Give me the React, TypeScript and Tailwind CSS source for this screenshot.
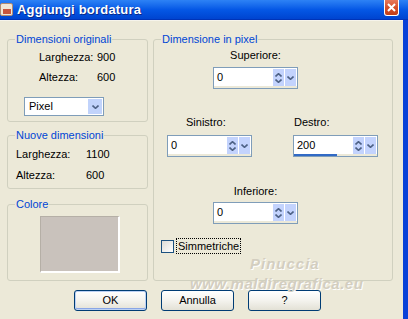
import type { ReactNode } from "react";

function Group({ title, className = "", children }: { title: string; className?: string; children: ReactNode }) {
  return (
    <fieldset className={`border border-[#D0D0BF] rounded-[3px] min-w-0 ${className}`}>
      <legend className="ml-[7px] px-[1px] text-[#0046D5] leading-[13px]">{title}</legend>
      {children}
    </fieldset>
  );
}

function Chevron({ up = false, w = 7 }: { up?: boolean; w?: number }) {
  return (
    <svg width={w} height="4" viewBox="0 0 7 4" className="block">
      <path d={up ? "M0.5 3.5 L3.5 0.7 L6.5 3.5" : "M0.5 0.5 L3.5 3.3 L6.5 0.5"} fill="none" stroke="#4D6185" strokeWidth="1.6" />
    </svg>
  );
}

function SpinBox({ value, fill = 0 }: { value: string; fill?: number }) {
  return (
    <div className="w-[85px] h-[22px] border border-[#7F9DB9] bg-white flex flex-col">
      <div className="flex flex-1 items-stretch pr-[1px] pt-[1px]">
        <span className="flex-1 pl-[3px] text-[11px] leading-[17px]">{value}</span>
        <div className="w-[11px] bg-[#C3D3FD] flex flex-col items-center justify-center gap-[2px]">
          <Chevron up />
          <Chevron />
        </div>
        <div className="w-[11px] ml-[1px] bg-[#C3D3FD] flex items-center justify-center">
          <Chevron />
        </div>
      </div>
      <div className="h-[3px] bg-[#ECE9D8]">
        <div className="h-full bg-[#316AC5]" style={{ width: `${fill}%` }} />
      </div>
    </div>
  );
}

function XpButton({ label, isDefault = false }: { label: string; isDefault?: boolean }) {
  return (
    <button
      className={`w-[73px] h-[21px] rounded-[3px] border border-[#003C74] bg-linear-to-b from-white via-[#F4F3EE] to-[#E3E1D6] text-[11px] leading-[19px] text-black ${
        isDefault ? "shadow-[inset_0_0_0_1px_#BCD1F4,inset_0_-1px_0_1px_#8AA6E6]" : ""
      }`}
    >
      {label}
    </button>
  );
}

export default function App() {
  return (
    <div className="w-[408px] h-[319px] overflow-hidden flex flex-col font-['Liberation_Sans',Arial,sans-serif] text-[11px] text-black select-none">
      {/* Title bar */}
      <div className="h-[20px] flex items-start bg-linear-to-b from-[#2D82F5] via-[#0558E6] to-[#0044D0] border-b border-[#0034B8]">
        <div className="mt-[3px] w-[13px] h-[13px] rounded-[2px] bg-[#F0E6D6] border border-[#B08A70] flex items-end justify-center">
          <div className="w-[8px] h-[5px] mb-[1px] bg-[#C8553D]" />
        </div>
        <span className="ml-[4px] mt-[2px] text-[13px] font-bold leading-[15px] text-white [text-shadow:1px_1px_0_#0A2A8A] tracking-[0.2px]">
          Aggiungi bordatura
        </span>
        <div className="ml-auto mr-[9px] w-[15px] h-[16px] rounded-b-[3px] border border-t-0 border-white bg-linear-to-b from-[#E8785A] via-[#D6502A] to-[#C13E16] flex items-center justify-center">
          <svg width="9" height="9" viewBox="0 0 9 9">
            <path d="M1 1 L8 8 M8 1 L1 8" stroke="white" strokeWidth="2" />
          </svg>
        </div>
      </div>

      {/* Body */}
      <div className="flex-1 flex bg-[#0841D8]">
        <div className="flex-1 bg-[#ECE9D8] border-t border-[#F6F4EC] pt-[12px] pl-[7px]">
          <div className="flex gap-[5px] w-[386px]">
            {/* Left column */}
            <div className="w-[141px] flex flex-col">
              <Group title="Dimensioni originali">
                <div className="pt-[5px] pb-[5px]">
                  <div className="grid grid-cols-[58px_auto] gap-y-[7px] pl-[31px] leading-[13px]">
                    <span>Larghezza:</span>
                    <span>900</span>
                    <span>Altezza:</span>
                    <span>600</span>
                  </div>
                  <div className="ml-[16px] mt-[13px] w-[80px] h-[19px] border border-[#7F9DB9] bg-white flex items-stretch p-[1px]">
                    <span className="flex-1 pl-[3px] leading-[15px]">Pixel</span>
                    <div className="w-[14px] bg-[#C1D3FB] flex items-center justify-center">
                      <Chevron />
                    </div>
                  </div>
                </div>
              </Group>

              <Group title="Nuove dimensioni" className="mt-[7px]">
                <div className="pt-[6px] pb-[6px] grid grid-cols-[70px_auto] gap-y-[8px] pl-[8px] leading-[13px]">
                  <span>Larghezza:</span>
                  <span>1100</span>
                  <span>Altezza:</span>
                  <span>600</span>
                </div>
              </Group>

              <Group title="Colore" className="mt-[9px]">
                <div className="pt-[5px] pb-[7px] pl-[32px]">
                  <div className="w-[80px] h-[57px] bg-[#C9C2BC] border-t border-l border-r-2 border-b-2 border-t-[#B5AFA6] border-l-[#B5AFA6] border-r-white border-b-white" />
                </div>
              </Group>
            </div>

            {/* Right group */}
            <Group title="Dimensione in pixel" className="relative w-[240px]">
              <div className="pl-[59px] pt-[3px]">
                <div className="w-[85px] text-center leading-[13px]">Superiore:</div>
                <div className="mt-[5px]">
                  <SpinBox value="0" />
                </div>
              </div>

              <div className="flex gap-[41px] pl-[13px] mt-[27px]">
                <div>
                  <div className="pl-[19px] leading-[13px]">Sinistro:</div>
                  <div className="mt-[6px]">
                    <SpinBox value="0" />
                  </div>
                </div>
                <div>
                  <div className="pl-[1px] leading-[13px]">Destro:</div>
                  <div className="mt-[6px]">
                    <SpinBox value="200" fill={52} />
                  </div>
                </div>
              </div>

              <div className="pl-[59px] mt-[28px]">
                <div className="w-[85px] text-center leading-[13px]">Inferiore:</div>
                <div className="mt-[4px]">
                  <SpinBox value="0" />
                </div>
              </div>

              <div className="flex items-center pl-[7px] mt-[14px]">
                <div className="w-[13px] h-[13px] border border-[#1C5180] bg-linear-to-br from-[#DCDCD7] to-white" />
                <span className="ml-[2px] px-[1px] border border-dotted border-black leading-[14px]">Simmetriche</span>
              </div>

              {/* watermark */}
              <div className="absolute left-[96px] top-[207px] text-[15px] font-bold italic tracking-[1px] text-[#D3CEC0] [text-shadow:1px_1px_0_#FFFFFF]">
                Pinuccia
              </div>
              <div className="absolute left-[36px] top-[227px] text-[15px] font-bold italic tracking-[0.5px] text-[#D3CEC0] [text-shadow:1px_1px_0_#FFFFFF] whitespace-nowrap">
                www.maldiregrafica.eu
              </div>
            </Group>
          </div>

          {/* Buttons */}
          <div className="flex gap-[14px] pl-[67px] mt-[9px]">
            <XpButton label="OK" isDefault />
            <XpButton label="Annulla" />
            <XpButton label="?" />
          </div>
        </div>
        <div className="w-[5px]" />
      </div>
    </div>
  );
}
